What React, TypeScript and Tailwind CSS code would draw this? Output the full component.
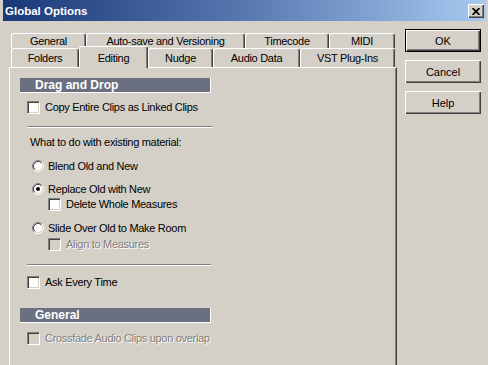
import React from "react"

function Check({ disabled }: { disabled?: boolean }) {
  return (
    <span
      className={
        disabled
          ? "box-border block w-[13px] h-[13px] shrink-0 border border-t-[#808080] border-l-[#808080] border-b-white border-r-white bg-[#d4d0c8] shadow-[inset_1px_1px_0_#404040,inset_-1px_-1px_0_#d4d0c8]"
          : "box-border block w-[13px] h-[13px] shrink-0 border border-t-[#808080] border-l-[#808080] border-b-white border-r-white bg-white shadow-[inset_1px_1px_0_#404040,inset_-1px_-1px_0_#d4d0c8]"
      }
    />
  )
}

function Radio({ checked }: { checked?: boolean }) {
  return (
    <svg width="12" height="12" viewBox="0 0 12 12" className="shrink-0">
      <circle cx="6" cy="6" r="5" fill="#ffffff" />
      <path d="M2.11 9.89 A5.5 5.5 0 0 1 9.89 2.11" fill="none" stroke="#808080" strokeWidth="1" />
      <path d="M9.89 2.11 A5.5 5.5 0 0 1 2.11 9.89" fill="none" stroke="#ffffff" strokeWidth="1" />
      <path d="M2.82 9.18 A4.5 4.5 0 0 1 9.18 2.82" fill="none" stroke="#404040" strokeWidth="1" />
      <path d="M9.18 2.82 A4.5 4.5 0 0 1 2.82 9.18" fill="none" stroke="#d4d0c8" strokeWidth="1" />
      {checked && <circle cx="6" cy="6" r="2" fill="#000000" />}
    </svg>
  )
}

function CheckRow({ label, disabled, className }: { label: string; disabled?: boolean; className: string }) {
  return (
    <div className={`flex items-center h-[14px] ${className}`}>
      <Check disabled={disabled} />
      <span
        className={
          disabled ? "ml-[5px] text-[#808080] [text-shadow:1px_1px_0_#ffffff]" : "ml-[5px]"
        }
      >
        {label}
      </span>
    </div>
  )
}

function RadioRow({ label, checked, className }: { label: string; checked?: boolean; className: string }) {
  return (
    <div className={`flex items-center h-[14px] ml-[22px] ${className}`}>
      <Radio checked={checked} />
      <span className="ml-[4px]">{label}</span>
    </div>
  )
}

const tab =
  "box-border flex items-center justify-center rounded-t-[3px] border-t border-l border-r border-t-white border-l-white border-r-[#404040] shadow-[inset_-1px_0_0_#808080]"

const btn =
  "box-border h-[23px] flex items-center justify-center shadow-[inset_1px_1px_0_#ffffff,inset_-1px_-1px_0_#404040,inset_-2px_-2px_0_#808080]"

export default function App() {
  return (
    <div className="w-[488px] h-[365px] overflow-hidden bg-[#d4d0c8] flex flex-col font-['Liberation_Sans',Arial,sans-serif] text-[11px] leading-[14px] tracking-[-0.3px] text-black">
      {/* title bar */}
      <div className="h-[21px] mx-[3px] mr-[2px] shrink-0 flex items-center bg-gradient-to-r from-[#1a3878] via-[#5878b0] to-[#a8caf0]">
        <span className="ml-[2px] text-white font-bold text-[11.5px] tracking-normal">Global Options</span>
        <div className="ml-auto mr-[2px] mt-[1px] box-border w-[16px] h-[14px] bg-[#d4d0c8] flex items-center justify-center shadow-[inset_1px_1px_0_#ffffff,inset_-1px_-1px_0_#404040,inset_-2px_-2px_0_#808080]">
          <svg width="8" height="7" viewBox="0 0 8 7">
            <path d="M0.5 0 L7.5 7 M7.5 0 L0.5 7" stroke="#000" strokeWidth="1.7" />
          </svg>
        </div>
      </div>

      <div className="flex flex-1 min-h-0">
        {/* tabs + page */}
        <div className="ml-[9px] w-[388px] mt-[12px] flex flex-col">
          <div className="flex h-[15px] pl-[2px]">
            <div className={`${tab} w-[75px]`}>General</div>
            <div className={`${tab} w-[159px]`}>Auto-save and Versioning</div>
            <div className={`${tab} w-[84px]`}>Timecode</div>
            <div className={`${tab} w-[66px]`}>MIDI</div>
          </div>
          <div className="flex h-[19px] pl-[2px] items-start">
            <div className={`${tab} w-[68px] h-[19px]`}>Folders</div>
            <div className={`${tab} w-[69px] h-[22px] -mt-[2px] relative z-10 bg-[#d4d0c8]`}>Editing</div>
            <div className={`${tab} w-[65px] h-[19px]`}>Nudge</div>
            <div className={`${tab} w-[87px] h-[19px]`}>Audio Data</div>
            <div className={`${tab} w-[95px] h-[19px]`}>VST Plug-Ins</div>
          </div>

          <div className="flex-1 flex flex-col border-l border-t border-r border-l-white border-t-white border-r-[#404040] shadow-[inset_-1px_0_0_#808080]">
            <div className="mt-[10px] ml-[10px] w-[191px] h-[15px] box-border bg-[#6a7080] border-r border-b border-white flex items-center pl-[15px] text-white font-bold text-[12px] tracking-normal">
              Drag and Drop
            </div>
            <CheckRow label="Copy Entire Clips as Linked Clips" className="mt-[7px] ml-[17px]" />
            <div className="mt-[12px] ml-[17px] w-[186px] h-[2px] box-border border-t border-b border-t-[#808080] border-b-white" />
            <div className="mt-[7px] ml-[20px] h-[14px] flex items-center">What to do with existing material:</div>
            <RadioRow label="Blend Old and New" className="mt-[10px]" />
            <RadioRow label="Replace Old with New" checked className="mt-[9px]" />
            <CheckRow label="Delete Whole Measures" className="mt-[1px] ml-[38px]" />
            <RadioRow label="Slide Over Old to Make Room" className="mt-[10px]" />
            <CheckRow label="Align to Measures" disabled className="mt-[2px] ml-[38px]" />
            <div className="mt-[13px] ml-[17px] w-[184px] h-[2px] box-border border-t border-b border-t-[#808080] border-b-white" />
            <CheckRow label="Ask Every Time" className="mt-[9px] ml-[17px]" />
            <div className="mt-[19px] ml-[10px] w-[191px] h-[15px] box-border bg-[#6a7080] border-r border-b border-white flex items-center pl-[15px] text-white font-bold text-[12px] tracking-normal">
              General
            </div>
            <CheckRow label="Crossfade Audio Clips upon overlap" disabled className="mt-[8px] ml-[17px]" />
          </div>
        </div>

        {/* buttons */}
        <div className="ml-[8px] mt-[8px] w-[76px] flex flex-col gap-[8px] tracking-normal">
          <div className={`${btn} border border-black`}>OK</div>
          <div className={btn}>Cancel</div>
          <div className={btn}>Help</div>
        </div>
      </div>
    </div>
  )
}
